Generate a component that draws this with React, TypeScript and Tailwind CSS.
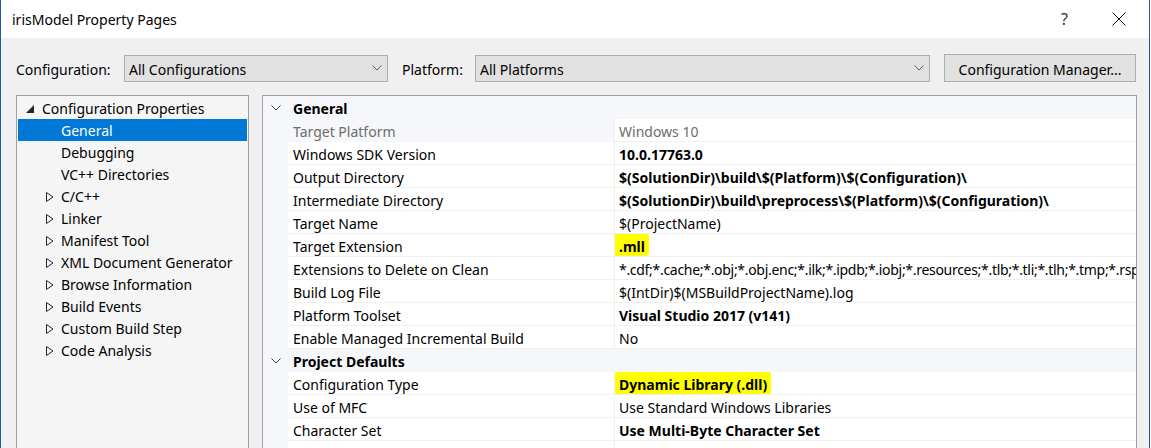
import React from 'react';

type TreeItem = { label: string; level: 0 | 1; glyph?: 'open' | 'closed'; selected?: boolean };

const treeItems: TreeItem[] = [
  { label: 'Configuration Properties', level: 0, glyph: 'open' },
  { label: 'General', level: 1, selected: true },
  { label: 'Debugging', level: 1 },
  { label: 'VC++ Directories', level: 1 },
  { label: 'C/C++', level: 1, glyph: 'closed' },
  { label: 'Linker', level: 1, glyph: 'closed' },
  { label: 'Manifest Tool', level: 1, glyph: 'closed' },
  { label: 'XML Document Generator', level: 1, glyph: 'closed' },
  { label: 'Browse Information', level: 1, glyph: 'closed' },
  { label: 'Build Events', level: 1, glyph: 'closed' },
  { label: 'Custom Build Step', level: 1, glyph: 'closed' },
  { label: 'Code Analysis', level: 1, glyph: 'closed' },
];

type GridRow =
  | { kind: 'cat'; label: string }
  | { kind: 'prop'; name: string; value: string; bold?: boolean; disabled?: boolean; tight?: boolean; mark?: 'short' | 'long' };

const gridRows: GridRow[] = [
  { kind: 'cat', label: 'General' },
  { kind: 'prop', name: 'Target Platform', value: 'Windows 10', disabled: true },
  { kind: 'prop', name: 'Windows SDK Version', value: '10.0.17763.0', bold: true },
  { kind: 'prop', name: 'Output Directory', value: '$(SolutionDir)\\build\\$(Platform)\\$(Configuration)\\', bold: true },
  { kind: 'prop', name: 'Intermediate Directory', value: '$(SolutionDir)\\build\\preprocess\\$(Platform)\\$(Configuration)\\', bold: true },
  { kind: 'prop', name: 'Target Name', value: '$(ProjectName)' },
  { kind: 'prop', name: 'Target Extension', value: '.mll', bold: true, mark: 'short' },
  {
    kind: 'prop',
    name: 'Extensions to Delete on Clean',
    value: '*.cdf;*.cache;*.obj;*.obj.enc;*.ilk;*.ipdb;*.iobj;*.resources;*.tlb;*.tli;*.tlh;*.tmp;*.rsp;*.pgc;*.pgd;*.meta;*.tlog;*.manifest;*.res;*.pch;*.exp;*.idb',
    tight: true,
  },
  { kind: 'prop', name: 'Build Log File', value: '$(IntDir)$(MSBuildProjectName).log' },
  { kind: 'prop', name: 'Platform Toolset', value: 'Visual Studio 2017 (v141)', bold: true },
  { kind: 'prop', name: 'Enable Managed Incremental Build', value: 'No' },
  { kind: 'cat', label: 'Project Defaults' },
  { kind: 'prop', name: 'Configuration Type', value: 'Dynamic Library (.dll)', bold: true, mark: 'long' },
  { kind: 'prop', name: 'Use of MFC', value: 'Use Standard Windows Libraries' },
  { kind: 'prop', name: 'Character Set', value: 'Use Multi-Byte Character Set', bold: true },
  { kind: 'prop', name: '', value: '' },
];

const Chevron = ({ className }: { className?: string }) => (
  <svg width="10" height="6" viewBox="0 0 10 6" className={className}>
    <path d="M0.5 0.5 L5 5 L9.5 0.5" fill="none" stroke="currentColor" strokeWidth="1" />
  </svg>
);

const ComboBox = ({ text, width }: { text: string; width: string }) => (
  <div className={`${width} h-[27px] bg-[#e1e1e1] border border-[#adadad] flex items-center justify-between pl-[4px] pr-[5px]`}>
    <span className="pt-[2px]">{text}</span>
    <Chevron className="text-[#606060]" />
  </div>
);

const TreeRow = ({ item }: { item: TreeItem }) => (
  <div className={`h-[22px] flex items-center ${item.selected ? 'bg-[#0078d7] text-white' : 'text-black'} ${item.level === 0 ? 'pl-[8px]' : 'pl-[28px]'}`}>
    <div className={`${item.level === 0 ? 'w-[16px]' : 'w-[15px]'} flex items-center pt-[1px]`}>
      {item.glyph === 'open' && (
        <svg width="8" height="8" viewBox="0 0 8 8">
          <polygon points="8,0 8,8 0,8" fill="#262626" />
        </svg>
      )}
      {item.glyph === 'closed' && (
        <svg width="8" height="10" viewBox="0 0 8 10">
          <polygon points="0.5,0.5 7,5 0.5,9.5" fill="none" stroke="#262626" strokeWidth="1" />
        </svg>
      )}
    </div>
    <span className="leading-none pt-[2px]">{item.label}</span>
  </div>
);

const GridLine = ({ row }: { row: GridRow }) => {
  if (row.kind === 'cat') {
    return (
      <div className="h-[23px] flex items-center bg-[#f5f7fa]">
        <div className="w-[30px] flex justify-center pr-[5px]">
          <Chevron className="text-[#3c3c3c]" />
        </div>
        <span className="font-bold pt-[2px]">{row.label}</span>
      </div>
    );
  }
  return (
    <div className="h-[23px] flex bg-[#f5f7fa]">
      <div className="w-[25px] shrink-0" />
      <div
        className={`w-[327px] shrink-0 flex items-center pl-[5px] pt-[2px] border-r border-[#f0f0f0] ${
          row.disabled ? 'bg-[#f5f7fa] text-[#6d6d6d]' : 'bg-white border-b text-black'
        }`}
      >
        {row.name}
      </div>
      <div
        className={`flex-1 min-w-0 flex items-center pl-[4px] bg-white border-b border-[#f0f0f0] overflow-hidden whitespace-nowrap ${
          row.disabled ? 'text-[#6d6d6d]' : 'text-black'
        } ${row.bold ? 'font-bold' : ''} ${row.tight ? 'tracking-[-0.3px]' : ''}`}
      >
        {row.mark === 'short' && (
          <span className="-ml-[7px] pl-[7px] pr-[4px] pt-[2px] h-[22px] flex items-center bg-[#ffff00] rounded-[3px]">{row.value}</span>
        )}
        {row.mark === 'long' && (
          <span className="-ml-[4px] pl-[4px] pr-[4px] pt-[2px] h-[24px] flex items-center bg-[#ffff00] rounded-[4px]">{row.value}</span>
        )}
        {!row.mark && <span className="pt-[2px]">{row.value}</span>}
      </div>
    </div>
  );
};

export default function App() {
  return (
    <div className="w-[1151px] h-[448px] bg-white overflow-hidden">
      <div className="w-[1150px] h-[448px] flex flex-col bg-[#f0f0f0] border-l border-r border-[#1f5ba8] font-['Noto_Sans',sans-serif] text-[14px] text-black overflow-hidden">
        {/* title bar */}
        <div className="h-[38px] shrink-0 bg-white flex items-center justify-between pl-[11px]">
          <span className="text-[14px] pt-[1px]">irisModel Property Pages</span>
          <div className="flex items-center h-full">
            <span className="text-[16px] text-[#333] mr-[44px]">?</span>
            <svg width="14" height="14" viewBox="0 0 14 14" className="mr-[23px]">
              <path d="M0.5 0.5 L13.5 13.5 M13.5 0.5 L0.5 13.5" stroke="#111" strokeWidth="1" />
            </svg>
          </div>
        </div>

        {/* configuration / platform */}
        <div className="mt-[16px] flex items-center pl-[15px]">
          <span className="w-[108px] pt-[2px]">Configuration:</span>
          <ComboBox text="All Configurations" width="w-[264px]" />
          <span className="ml-[14px] w-[73px] pt-[2px]">Platform:</span>
          <ComboBox text="All Platforms" width="w-[455px]" />
          <button className="ml-[14px] w-[192px] h-[28px] bg-[#e1e1e1] border border-[#adadad] flex items-center justify-center pt-[2px]">
            Configuration Manager...
          </button>
        </div>

        {/* panels */}
        <div className="mt-[13px] flex pl-[15px] flex-1 min-h-0">
          <div className="w-[233px] h-[400px] shrink-0 bg-[#f5f5f5] border border-[#a0a0a0] px-[1px] pt-[1px]">
            {treeItems.map((it) => (
              <TreeRow key={it.label} item={it} />
            ))}
          </div>
          <div className="ml-[13px] w-[875px] h-[400px] shrink-0 bg-[#f5f7fa] border border-[#a0a0a0] overflow-hidden">
            {gridRows.map((r, i) => (
              <GridLine key={i} row={r} />
            ))}
          </div>
        </div>
      </div>
    </div>
  );
}
